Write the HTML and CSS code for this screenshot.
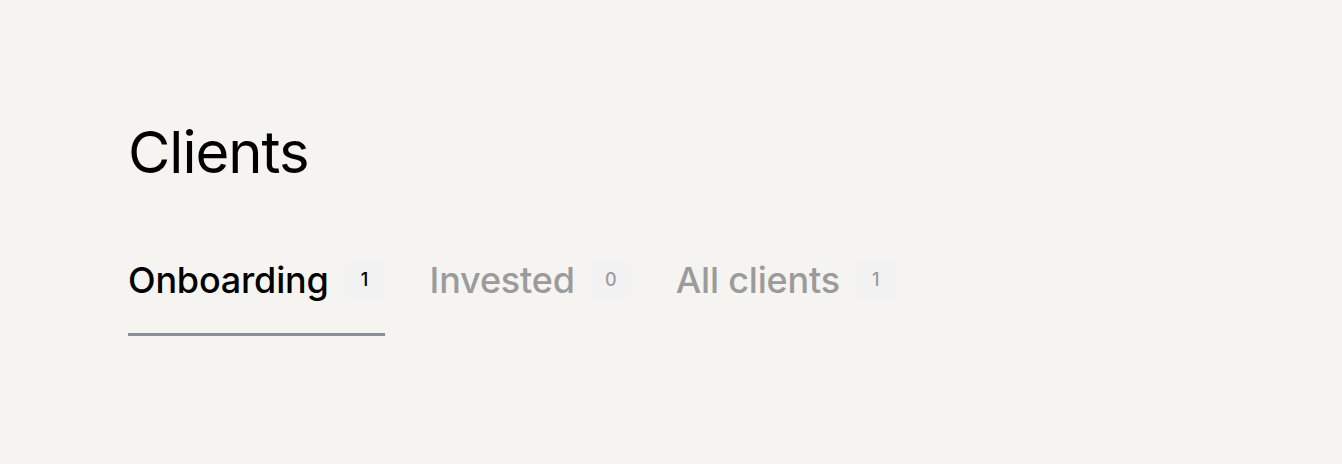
FILE: index.html
```html
<!DOCTYPE html>
<html lang="en">
<head>
<meta charset="utf-8">
<title>Clients</title>
<link rel="stylesheet" href="styles.css">
</head>
<body>
<main class="page">
  <h1 class="title">Clients</h1>
  <nav class="tabs">
    <a class="tab active" href="#">Onboarding <span class="count">1</span></a>
    <a class="tab" href="#">Invested <span class="count">0</span></a>
    <a class="tab" href="#">All clients <span class="count">1</span></a>
  </nav>
</main>
</body>
</html>
```

FILE: styles.css
```css
html, body {
  margin: 0;
  padding: 0;
  background: #f5f4f0;
  height: 100%;
}
body {
  font-family: Inter, "Liberation Sans", sans-serif;
  color: #000;
}
.page {
  padding: 112px 0 0 128px;
}
.title {
  margin: 0;
  font-size: 58px;
  font-weight: 400;
  line-height: 80px;
  letter-spacing: -1px;
}
.tabs {
  display: flex;
  gap: 45px;
  margin-top: 67px;
}
.tab {
  display: flex;
  align-items: center;
  gap: 16px;
  padding-bottom: 32px;
  font-size: 36px;
  font-weight: 500;
  letter-spacing: -0.2px;
  color: #9b9b9b;
  text-decoration: none;
  border-bottom: 3px solid transparent;
  line-height: 42px;
}
.tab.active {
  color: #000;
  border-bottom-color: #8a9096;
}
.count {
  display: inline-flex;
  align-items: center;
  justify-content: center;
  width: 40px;
  height: 42px;
  border-radius: 6px;
  background: #f2f2f3;
  font-size: 18px;
  font-weight: 500;
  letter-spacing: 0;
}
```
